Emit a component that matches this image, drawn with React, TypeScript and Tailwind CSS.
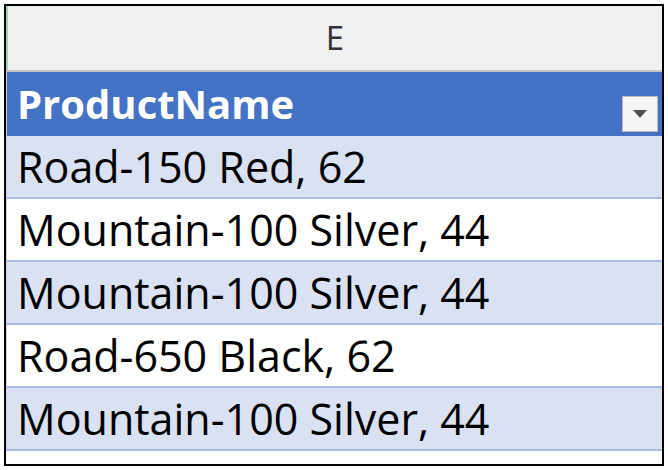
const rows = [
  "Road-150 Red, 62",
  "Mountain-100 Silver, 44",
  "Mountain-100 Silver, 44",
  "Road-650 Black, 62",
  "Mountain-100 Silver, 44",
];

export default function App() {
  return (
    <div className="w-[668px] h-[470px] bg-white pt-[4px] pl-[4px] font-['Open_Sans',sans-serif]">
      <div className="w-[660px] h-[462px] border-2 border-black bg-white flex flex-col">
        {/* column letter */}
        <div className="h-[66px] flex bg-[#f0f0f0] border-b-2 border-[#c6c6c6]">
          <div className="w-[2px] bg-[#9fd3b5]" />
          <div className="flex-1 flex items-center justify-center text-[33px] text-[#333]">E</div>
        </div>

        {/* table header */}
        <div className="h-[64px] flex bg-[#4472c4] pl-[10px] pr-[4px] border-l border-[#d0d0d0]">
          <span className="flex-1 self-center text-white font-bold text-[40px] leading-none">ProductName</span>
          <div className="self-end mb-[4px] w-[36px] h-[36px] bg-[#f4f4f4] border border-[#bcbcbc] flex items-center justify-center">
            <svg width="14" height="8" viewBox="0 0 14 8">
              <path d="M0 0 L14 0 L7 8 Z" fill="#505050" />
            </svg>
          </div>
        </div>

        {/* data rows */}
        {rows.map((r, i) => (
          <div
            key={i}
            className={
              "h-[63px] flex items-center pl-[10px] border-b-2 border-[#a9bde4] border-l border-l-[#d0d0d0] text-[43px] leading-none text-black " +
              (i % 2 === 0 ? "bg-[#d9e1f2]" : "bg-white")
            }
          >
            {r}
          </div>
        ))}
        <div className="flex-1 bg-white" />
      </div>
    </div>
  );
}
